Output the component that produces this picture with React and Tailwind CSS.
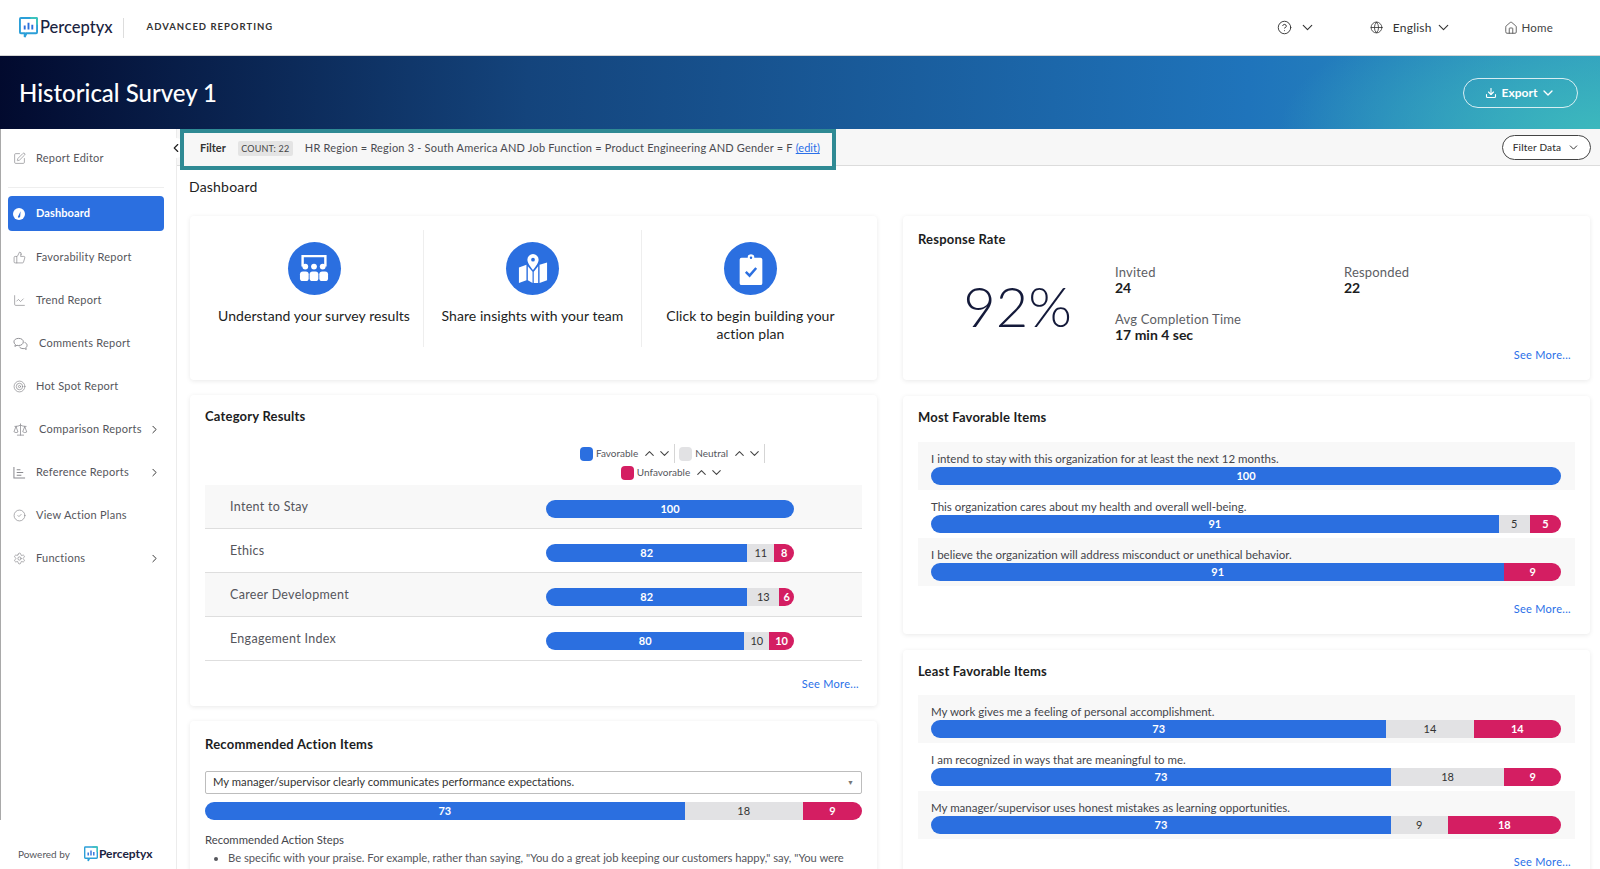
import React from 'react';
import {
  SquarePen, ThumbsUp, ChartLine, Target, Scale, CircleCheck, Settings, ChevronRight,
  ChevronDown, ChevronUp, ChevronLeft, CircleHelp, Globe, House, Download,
} from 'lucide-react';

const font = "font-['Lato','Liberation_Sans',sans-serif]";

const Logo = ({ className }) => (
  <svg viewBox="0 0 20 22" className={className}>
    <path d="M2 1h16a1 1 0 0 1 1 1v14a1 1 0 0 1-1 1H8l-2 4v-4H2a1 1 0 0 1-1-1V2a1 1 0 0 1 1-1z" fill="none" stroke="#2b9fd8" strokeWidth="2" />
    <path d="M6 13V9M10 13V6M14 13V8" stroke="#2a6fdb" strokeWidth="2" />
    <path d="M12 1h6a1 1 0 0 1 1 1v6" fill="none" stroke="#3cc4bc" strokeWidth="2" />
  </svg>
);

const DashIcon = () => (
  <svg viewBox="0 0 12 12" className="w-3 h-3">
    <circle cx="6" cy="6" r="6" fill="white" />
    <path d="M4.8 9 L7.6 3.2 L7.2 8.2 A1.3 1.3 0 0 1 4.8 9z" fill="#2b6fe0" />
  </svg>
);

const CommentsIcon = () => (
  <svg viewBox="0 0 16 14" className="w-[15px] h-[14px]" fill="none" stroke="#8a8a8f" strokeWidth="1">
    <path d="M6 1C3 1 1 2.6 1 4.7c0 1.100.6 2.100 1.500 2.800L2 9.500l2.300-1.100c.5.100 1.100.2 1.700.2 3 0 5-1.700 5-3.900S9 1 6 1z" />
    <path d="M12.300 5.300C14 5.800 15 7 15 8.500c0 1-.5 1.900-1.300 2.500l.4 1.800-2-1c-.4.100-.8.100-1.300.100-1.900 0-3.400-.8-4.100-2.100" />
  </svg>
);

const RefIcon = () => (
  <svg viewBox="0 0 14 14" className="w-[13px] h-[13px]" fill="none" stroke="#8a8a8f" strokeWidth="1.100">
    <path d="M1 1v12h12M4 4h4M4 7h7M4 10h5" />
  </svg>
);

const navItems = [
  { label: 'Favorability Report', icon: <ThumbsUp className="w-[13px] h-[13px] text-[#8a8a8f]" strokeWidth={1.300} /> },
  { label: 'Trend Report', icon: <ChartLine className="w-[13px] h-[13px] text-[#8a8a8f]" strokeWidth={1.300} /> },
  { label: 'Comments Report', icon: <CommentsIcon />, wide: true },
  { label: 'Hot Spot Report', icon: <Target className="w-[13px] h-[13px] text-[#8a8a8f]" strokeWidth={1.300} /> },
  { label: 'Comparison Reports', icon: <Scale className="w-[15px] h-[15px] text-[#8a8a8f]" strokeWidth={1.200} />, wide: true, more: true },
  { label: 'Reference Reports', icon: <RefIcon />, more: true },
  { label: 'View Action Plans', icon: <CircleCheck className="w-[13px] h-[13px] text-[#8a8a8f]" strokeWidth={1.300} /> },
  { label: 'Functions', icon: <Settings className="w-[13px] h-[13px] text-[#8a8a8f]" strokeWidth={1.300} />, more: true },
];

const Sidebar = () => (
  <aside className="w-[177px] shrink-0 border-r border-[#ececec] flex flex-col relative">
    <div className="border-l border-[#a9a9a9] h-[691px] flex flex-col">
      <div className="ml-[7px] mr-[12px] h-[59px] border-b border-[#eeeeee] flex items-center pl-[5px] text-[#55565c]">
        <SquarePen className="w-[13px] h-[13px] text-[#8a8a8f]" strokeWidth={1.300} />
        <span className="ml-[10px] text-[11px] tracking-[0.25px]">Report Editor</span>
      </div>
      <div className="ml-[7px] mr-[12px] mt-[8px] h-[35px] rounded bg-[#2b6fe0] flex items-center pl-[5px] text-white">
        <DashIcon />
        <span className="ml-[11px] text-[11px] font-bold tracking-[0.1px]">Dashboard</span>
      </div>
      <div className="flex flex-col mt-[5px] ml-[7px] mr-[12px]">
        {navItems.map((item) => (
          <div key={item.label} className="h-[43px] flex items-center pl-[5px] pr-[3px] text-[#55565c]">
            <span className="w-[15px] flex justify-start">{item.icon}</span>
            <span className={`text-[11px] tracking-[0.25px] ${item.wide ? 'ml-[11px]' : 'ml-[8px]'}`}>{item.label}</span>
            {item.more && <ChevronRight className="w-[13px] h-[13px] ml-auto text-[#333]" strokeWidth={1.800} />}
          </div>
        ))}
      </div>
    </div>
    <div className="mt-auto h-[42px] flex items-center pl-[18px] pt-[12px]">
      <span className="text-[10px] text-[#55565c]">Powered by</span>
      <Logo className="w-[14px] h-[16px] ml-[14px]" />
      <span className="ml-[1px] text-[12px] font-bold text-[#1a2340]">Perceptyx</span>
    </div>
  </aside>
);

const Card = ({ className, children }) => (
  <section className={`bg-white rounded shadow-[0_1px_5px_rgba(0,0,0,0.09)] ${className}`}>{children}</section>
);

const Bar = ({ fav, neu, unf, className = '' }) => {
  const total = fav + (neu || 0) + (unf || 0);
  return (
    <div className={`flex h-[18px] rounded-full overflow-hidden text-[11px] leading-[18px] text-center ${className}`}>
      <div className="bg-[#2b6fe0] text-white font-bold" style={{ width: `${(fav / total) * 100}%` }}>{fav}</div>
      {neu ? <div className="bg-[#e2e2e4] text-[#333]" style={{ width: `${(neu / total) * 100}%` }}>{neu}</div> : null}
      {unf ? <div className="bg-[#d41e62] text-white font-bold" style={{ width: `${(unf / total) * 100}%` }}>{unf}</div> : null}
    </div>
  );
};

const SeeMore = ({ className = '' }) => (
  <div className={`text-right text-[11px] tracking-[0.3px] text-[#2a6fe8] ${className}`}>See More...</div>
);

const Sort = () => (
  <span className="inline-flex items-center ml-[4px]">
    <ChevronUp className="w-[15px] h-[15px] text-[#444]" strokeWidth={1.700} />
    <ChevronDown className="w-[15px] h-[15px] text-[#444]" strokeWidth={1.700} />
  </span>
);

const categories = [
  { name: 'Intent to Stay', fav: 100 },
  { name: 'Ethics', fav: 82, neu: 11, unf: 8 },
  { name: 'Career Development', fav: 82, neu: 13, unf: 6 },
  { name: 'Engagement Index', fav: 80, neu: 10, unf: 10 },
];

const mostFav = [
  { text: 'I intend to stay with this organization for at least the next 12 months.', fav: 100 },
  { text: 'This organization cares about my health and overall well-being.', fav: 91, neu: 5, unf: 5 },
  { text: 'I believe the organization will address misconduct or unethical behavior.', fav: 91, unf: 9 },
];

const leastFav = [
  { text: 'My work gives me a feeling of personal accomplishment.', fav: 73, neu: 14, unf: 14 },
  { text: 'I am recognized in ways that are meaningful to me.', fav: 73, neu: 18, unf: 9 },
  { text: 'My manager/supervisor uses honest mistakes as learning opportunities.', fav: 73, neu: 9, unf: 18 },
];

const ItemRows = ({ items }) => (
  <div className="flex flex-col">
    {items.map((it, i) => (
      <div key={it.text} className={`h-[48px] pl-[13px] pr-[14px] pt-[9px] ${i % 2 === 0 ? 'bg-[#f8f8f8]' : ''}`}>
        <div className="text-[11.500px] leading-[16px] text-[#44454b]">{it.text}</div>
        <Bar fav={it.fav} neu={it.neu} unf={it.unf} />
      </div>
    ))}
  </div>
);

const PeopleIcon = () => (
  <svg viewBox="0 0 34 32" className="w-[34px] h-[31px]" fill="white">
    <path d="M4 14V2h26v12h-2.500V4.500h-21V14z" />
    <circle cx="8" cy="14" r="3" />
    <circle cx="17" cy="14" r="3" />
    <circle cx="26" cy="14" r="3" />
    <rect x="2.500" y="19" width="9" height="10" rx="3" />
    <rect x="12.500" y="19" width="9" height="10" rx="3" />
    <rect x="22.500" y="19" width="9" height="10" rx="3" />
  </svg>
);

const MapIcon = () => (
  <svg viewBox="0 0 32 34" className="w-[30px] h-[34px]" fill="white">
    <path d="M16 1a6 6 0 0 0-6 6c0 4 6 11 6 11s6-7 6-11a6 6 0 0 0-6-6zm0 4a2 2 0 1 1 0 4 2 2 0 0 1 0-4z" />
    <path d="M9 12.500 1 15.500v16.500l8-3zM23 12.500l8-2.500v19l-8 3zM10.500 14v15l5 3V20zM21.500 14v18l-4.700-0V20z" />
  </svg>
);

const ClipIcon = () => (
  <svg viewBox="0 0 24 36" className="w-[24px] h-[34px]">
    <path d="M2 6h6.500a3.500 3.500 0 0 1 7 0H22a2 2 0 0 1 2 2v25a2 2 0 0 1-2 2H2a2 2 0 0 1-2-2V8a2 2 0 0 1 2-2z" fill="white" />
    <circle cx="12" cy="6" r="1.300" fill="#2b6fe0" />
    <path d="M6.500 21l4 4 7-8" fill="none" stroke="#2b6fe0" strokeWidth="2.600" />
  </svg>
);

const promos = [
  { icon: <PeopleIcon />, text: 'Understand your survey results', w: 'max-w-none' },
  { icon: <MapIcon />, text: 'Share insights with your team', w: 'max-w-none' },
  { icon: <ClipIcon />, text: 'Click to begin building your action plan', w: 'max-w-[180px]' },
];

const LeftColumn = () => (
  <div className="w-[687px] shrink-0 flex flex-col gap-[15px]">
    <Card className="h-[164px] px-[15px] pt-[14px]">
      <div className="grid grid-cols-3 h-[117px] pr-[3px]">
        {promos.map((p, i) => (
          <div key={p.text} className={`flex flex-col items-center pt-[12px] ${i > 0 ? 'border-l border-[#eeeeee]' : ''}`}>
            <div className="w-[53px] h-[53px] rounded-full bg-[#2b6fe0] flex items-center justify-center shrink-0">{p.icon}</div>
            <p className={`mt-[12px] text-[14px] leading-[18px] text-center text-[#1c1d22] tracking-[0.05px] ${p.w}`}>{p.text}</p>
          </div>
        ))}
      </div>
    </Card>

    <Card className="h-[311px] px-[15px] pt-[13px]">
      <h2 className="text-[13px] font-bold text-[#1c1d22] leading-[16px] tracking-[0.2px]">Category Results</h2>
      <div className="mt-[20px] flex flex-col items-center pl-[278px] text-[10px] text-[#55565c] leading-[19px]">
        <div className="flex items-center h-[19px]">
          <span className="w-[13px] h-[14px] rounded-[4px] bg-[#2b6fe0] mr-[3px]" />
          <span>Favorable</span>
          <Sort />
          <span className="h-[19px] border-l border-[#d5d5d5] ml-[2px] mr-[4px]" />
          <span className="w-[13px] h-[14px] rounded-[4px] bg-[#e2e2e4] mr-[3px]" />
          <span>Neutral</span>
          <Sort />
          <span className="h-[19px] border-l border-[#d5d5d5] ml-[2px]" />
        </div>
        <div className="flex items-center h-[19px]">
          <span className="w-[13px] h-[14px] rounded-[4px] bg-[#d41e62] mr-[3px]" />
          <span>Unfavorable</span>
          <Sort />
        </div>
      </div>
      <div className="mt-[3px]">
        {categories.map((c, i) => (
          <div key={c.name} className={`h-[44px] border-b border-[#dedede] flex items-center pl-[25px] pt-[4px] ${i % 2 === 0 ? 'bg-[#f8f8f8]' : ''}`}>
            <span className="w-[316px] text-[12.500px] text-[#55565c] tracking-[0.3px] -mt-[2px]">{c.name}</span>
            <Bar fav={c.fav} neu={c.neu} unf={c.unf} className="w-[248px]" />
          </div>
        ))}
      </div>
      <SeeMore className="mt-[15px] pr-[3px]" />
    </Card>

    <Card className="flex-1 px-[15px] pt-[15px] min-h-0">
      <h2 className="text-[13px] font-bold text-[#1c1d22] leading-[16px] tracking-[0.25px]">Recommended Action Items</h2>
      <div className="mt-[19px] h-[23px] border border-[#bdbdbd] rounded-[2px] flex items-center justify-between pl-[7px] pr-[7px] text-[11.300px] text-[#333]">
        <span>My manager/supervisor clearly communicates performance expectations.</span>
        <span className="text-[7px] text-[#777]">▼</span>
      </div>
      <Bar fav={73} neu={18} unf={9} className="mt-[8px]" />
      <div className="mt-[12px] text-[11.300px] leading-[16px] text-[#44454b]">Recommended Action Steps</div>
      <ul className="list-disc pl-[23px] pt-[2px] text-[11.200px] leading-[16px] text-[#55565c]">
        <li className="whitespace-nowrap">Be specific with your praise. For example, rather than saying, "You do a great job keeping our customers happy," say, "You were</li>
      </ul>
    </Card>
  </div>
);

const Stat = ({ label, value, className = '' }) => (
  <div className={className}>
    <div className="text-[13px] leading-[15px] text-[#5d5e64] tracking-[0.2px]">{label}</div>
    <div className="text-[14px] leading-[15px] font-bold text-[#1c1d22]">{value}</div>
  </div>
);

const RightColumn = () => (
  <div className="flex-1 flex flex-col gap-[16px]">
    <Card className="h-[164px] px-[15px] pt-[15px]">
      <h2 className="text-[13px] font-bold text-[#1c1d22] leading-[16px] tracking-[0.2px]">Response Rate</h2>
      <div className="flex mt-[11px] h-[84px]">
        <div className="w-[197px] flex items-center justify-center pl-[2px] pt-[12px]">
          <span className="text-[56px] font-light leading-none text-[#141a3a]">92%</span>
        </div>
        <div className="grid grid-cols-[229px_1fr] grid-rows-[47px_auto] pt-[7px]">
          <Stat label="Invited" value="24" />
          <Stat label="Responded" value="22" />
          <Stat label="Avg Completion Time" value="17 min 4 sec" />
        </div>
      </div>
      <SeeMore className="mt-[5px] pr-[4px]" />
    </Card>

    <Card className="h-[238px] px-[15px] pt-[13px]">
      <h2 className="text-[13px] font-bold text-[#1c1d22] leading-[16px] tracking-[0.2px]">Most Favorable Items</h2>
      <div className="mt-[17px]"><ItemRows items={mostFav} /></div>
      <SeeMore className="mt-[15px] pr-[4px]" />
    </Card>

    <Card className="flex-1 px-[15px] pt-[13px] min-h-0">
      <h2 className="text-[13px] font-bold text-[#1c1d22] leading-[16px] tracking-[0.2px]">Least Favorable Items</h2>
      <div className="mt-[16px]"><ItemRows items={leastFav} /></div>
      <SeeMore className="mt-[15px] pr-[4px]" />
    </Card>
  </div>
);

export default function App() {
  return (
    <div className={`h-[869px] w-[1600px] overflow-hidden flex flex-col bg-white ${font}`}>
      <header className="h-[56px] shrink-0 border-b border-[#d5d5d5] flex items-center text-[#333]">
        <Logo className="ml-[19px] w-[19px] h-[21px]" />
        <span className="ml-[2px] text-[16.500px] font-medium text-[#1a2340] -mt-[1px]">Perceptyx</span>
        <span className="ml-[10px] h-[20px] border-l border-[#dddddd]" />
        <span className="ml-[23px] text-[9.500px] font-bold tracking-[1px] text-[#333]">ADVANCED REPORTING</span>
        <div className="ml-auto flex items-center pr-[47px] text-[12px]">
          <CircleHelp className="w-[15px] h-[15px]" strokeWidth={1.500} />
          <ChevronDown className="ml-[7px] w-[17px] h-[17px]" strokeWidth={1.600} />
          <Globe className="ml-[54px] w-[13px] h-[13px]" strokeWidth={1.500} />
          <span className="ml-[10px] tracking-[0.2px]">English</span>
          <ChevronDown className="ml-[3px] w-[17px] h-[17px]" strokeWidth={1.600} />
          <House className="ml-[52px] w-[14px] h-[14px] text-[#555]" strokeWidth={1.500} />
          <span className="ml-[4px] text-[11.500px] tracking-[0.2px] text-[#444]">Home</span>
        </div>
      </header>

      <div className="h-[73px] shrink-0 bg-[radial-gradient(ellipse_320px_130px_at_100%_100%,#3cb8bd,transparent),linear-gradient(92deg,#020a2e_0%,#14447c_33%,#1f74bb_78%,#2f97c0_100%)] flex items-center justify-between pl-[19px] pr-[22px]">
        <h1 className="text-[24px] font-medium text-white">Historical Survey 1</h1>
        <button className="w-[115px] h-[30px] rounded-full border border-white/80 text-white text-[12px] font-bold flex items-center justify-center">
          <Download className="w-[12px] h-[12px]" strokeWidth={2.200} />
          <span className="ml-[5px]">Export</span>
          <ChevronDown className="ml-[3px] w-[16px] h-[16px]" strokeWidth={2} />
        </button>
      </div>

      <div className="flex-1 flex min-h-0">
        <Sidebar />
        <main className="flex-1 min-w-0 relative">
          <button className="absolute -left-[10px] top-[9px] w-[18px] h-[20px] rounded-full bg-white flex items-center justify-center">
            <ChevronLeft className="w-[14px] h-[14px] text-[#222]" strokeWidth={2} />
          </button>
          <div className="h-[37px] bg-[#f7f7f7] border-b border-[#dcdcdc] flex items-start pl-[3px] pr-[9px]">
            <div className="h-[41px] w-[656px] shrink-0 border-[4px] border-[#2f8a94] bg-[#f7f7f7] flex items-center pl-[16px] pb-[2px] text-[11px] relative z-10">
              <span className="font-bold text-[#333]">Filter</span>
              <span className="ml-[12px] w-[55px] text-center h-[15px] leading-[15px] bg-[#e4e4e4] rounded-[2px] text-[9px] text-[#444] tracking-[0.2px]">COUNT: 22</span>
              <span className="ml-[12px] text-[#4a4b51] tracking-[0.2px] whitespace-nowrap">HR Region = Region 3 - South America AND Job Function = Product Engineering AND Gender = F</span>
              <span className="ml-[3px] text-[#2a6fe8] underline">(edit)</span>
            </div>
            <button className="ml-auto mt-[6px] w-[89px] h-[25px] rounded-full border border-[#444] bg-white text-[10px] font-medium text-[#333] flex items-center justify-center tracking-[0.2px]">
              Filter Data
              <ChevronDown className="ml-[6px] w-[13px] h-[13px]" strokeWidth={1.800} />
            </button>
          </div>
          <div className="h-[50px] pl-[12px] pt-[12px] text-[14px] leading-[18px] text-[#222] tracking-[0.2px]">Dashboard</div>
          <div className="flex gap-[26px] pl-[13px] pr-[10px] h-[660px]">
            <LeftColumn />
            <RightColumn />
          </div>
        </main>
      </div>
    </div>
  );
}
